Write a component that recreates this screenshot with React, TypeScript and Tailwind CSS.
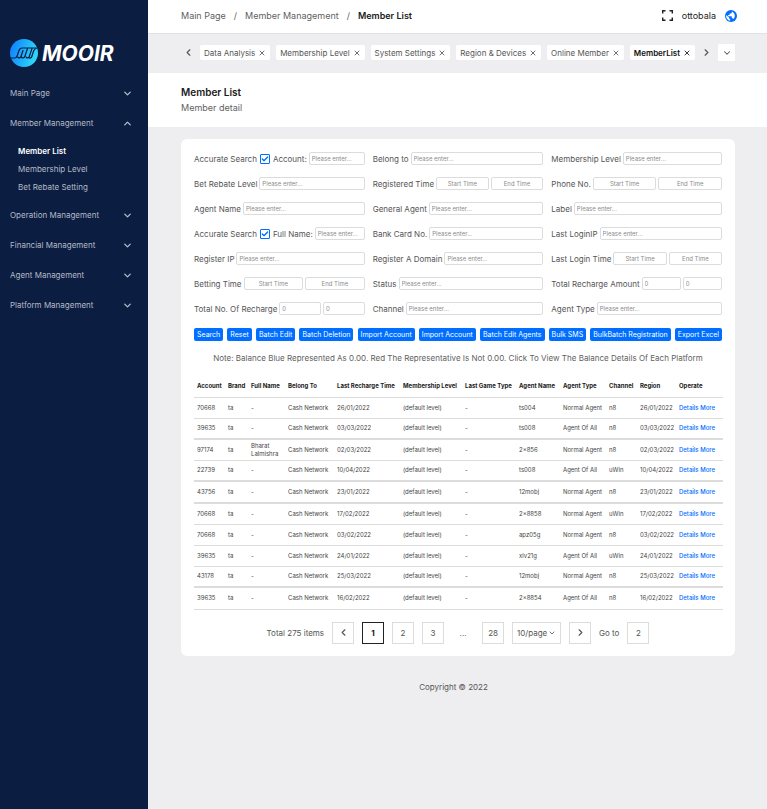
import { useState } from 'react';
import { Check, ChevronDown, ChevronLeft, ChevronRight, ChevronUp, X } from 'lucide-react';

const menu = [
  { label: 'Main Page' },
  { label: 'Member Management', children: ['Member List', 'Membership Level', 'Bet Rebate Setting'] },
  { label: 'Operation Management' },
  { label: 'Financial Management' },
  { label: 'Agent Management' },
  { label: 'Platform Management' },
];

const tabs = ['Data Analysis', 'Membership Level', 'System Settings', 'Region & Devices', 'Online Member', 'MemberList'];

type FieldType = 'text' | 'time' | 'range' | 'check';

interface FieldDef {
  label: string;
  type: FieldType;
  sub?: string;
}

// Row by row, three fields each
const fields: FieldDef[] = [
  { label: 'Accurate Search', type: 'check', sub: 'Account:' },
  { label: 'Belong to', type: 'text' },
  { label: 'Membership Level', type: 'text' },
  { label: 'Bet Rebate Level', type: 'text' },
  { label: 'Registered Time', type: 'time' },
  { label: 'Phone No.', type: 'time' },
  { label: 'Agent Name', type: 'text' },
  { label: 'General Agent', type: 'text' },
  { label: 'Label', type: 'text' },
  { label: 'Accurate Search', type: 'check', sub: 'Full Name:' },
  { label: 'Bank Card No.', type: 'text' },
  { label: 'Last LoginIP', type: 'text' },
  { label: 'Register IP', type: 'text' },
  { label: 'Register A Domain', type: 'text' },
  { label: 'Last Login Time', type: 'time' },
  { label: 'Betting Time', type: 'time' },
  { label: 'Status', type: 'text' },
  { label: 'Total Recharge Amount', type: 'range' },
  { label: 'Total No. Of Recharge', type: 'range' },
  { label: 'Channel', type: 'text' },
  { label: 'Agent Type', type: 'text' },
];

const actions = [
  'Search',
  'Reset',
  'Batch Edit',
  'Batch Deletion',
  'Import Account',
  'Import Account',
  'Batch Edit Agents',
  'Bulk SMS',
  'BulkBatch Registration',
  'Export Excel',
];

const columns = [
  { label: 'Account', width: 'w-[31px]' },
  { label: 'Brand', width: 'w-[23px]' },
  { label: 'Full Name', width: 'w-[37px]' },
  { label: 'Belong To', width: 'w-[49px]' },
  { label: 'Last Recharge Time', width: 'w-[66px]' },
  { label: 'Membership Level', width: 'w-[62px]' },
  { label: 'Last Game Type', width: 'w-[54px]' },
  { label: 'Agent Name', width: 'w-[44px]' },
  { label: 'Agent Type', width: 'w-[46px]' },
  { label: 'Channel', width: 'w-[31px]' },
  { label: 'Region', width: 'w-[39px]' },
  { label: 'Operate', width: 'w-[47px]' },
];

const members = [
  { account: '70668', name: '-', date: '26/01/2022', agent: 'ts004', type: 'Normal Agent', channel: 'n8' },
  { account: '39635', name: '-', date: '03/03/2022', agent: 'ts008', type: 'Agent Of All', channel: 'n8' },
  { account: '97174', name: 'Bharat Lalmishra', date: '02/03/2022', agent: '2×856', type: 'Normal Agent', channel: 'n8' },
  { account: '22739', name: '-', date: '10/04/2022', agent: 'ts008', type: 'Agent Of All', channel: 'uWin' },
  { account: '43756', name: '-', date: '23/01/2022', agent: '12mobj', type: 'Normal Agent', channel: 'n8' },
  { account: '70668', name: '-', date: '17/02/2022', agent: '2×8858', type: 'Normal Agent', channel: 'uWin' },
  { account: '70668', name: '-', date: '03/02/2022', agent: 'apz05g', type: 'Normal Agent', channel: 'n8' },
  { account: '39635', name: '-', date: '24/01/2022', agent: 'xlv21g', type: 'Agent Of All', channel: 'uWin' },
  { account: '43178', name: '-', date: '25/03/2022', agent: '12mobj', type: 'Normal Agent', channel: 'n8' },
  { account: '39635', name: '-', date: '16/02/2022', agent: '2×8854', type: 'Agent Of All', channel: 'n8' },
];

const inputClass =
  'h-[13px] min-w-0 flex-1 rounded-xs border border-[#dcdcdc] bg-white px-0.5 text-[6px] leading-none text-[#555] outline-none placeholder:text-[#8c8c8c] focus:border-[#006eff]';

function Logo() {
  return (
    <div className="flex h-[30px] items-center gap-1 px-2.5">
      <svg viewBox="0 0 28 28" className="size-7 shrink-0" aria-hidden="true">
        <defs>
          <linearGradient id="logo" x1="0" y1="0" x2="1" y2="0.3">
            <stop offset="0" stopColor="#0a7bff" />
            <stop offset="1" stopColor="#2fd5f8" />
          </linearGradient>
        </defs>
        <circle cx="14" cy="14" r="14" fill="url(#logo)" />
        <g fill="none" stroke="#0b1d41" strokeWidth="1.2" strokeLinecap="round" strokeLinejoin="round">
          <path d="M0 19h4.500c1.500 0 2.200-.8 2.700-2.300l1.700-5C9.500 9.800 10.400 9 12.200 9H28" />
          <path d="M13 11.500l-2 6c-.5 1.500-2.800 2-3.200.5" />
          <path d="M17.500 9.500l-2.700 8c-.5 1.500-3 2-3.300.3" />
          <path d="M22 9.500l-2.700 8c-.5 1.500-3 2-3.300.3" />
          <path d="M26 9.500c-1.500.3-1.900 1-2.400 2.500l-1.800 5.500c-.5 1.500-2 2-2.800 1.200" />
        </g>
      </svg>
      <span className="text-[21px] leading-none font-bold text-white italic">MOOIR</span>
    </div>
  );
}

function Sidebar() {
  return (
    <aside className="w-[148px] shrink-0 bg-[#0b1d41] pt-[38px] text-[8px] text-[#b4bac6]">
      <Logo />
      <nav className="mt-2.5">
        {menu.map(item => (
          <div key={item.label}>
            <button className="flex h-[30px] w-full items-center justify-between pr-[15px] pl-2.5">
              {item.label}
              {item.children ? (
                <ChevronUp className="size-[11px]" strokeWidth={3} />
              ) : (
                <ChevronDown className="size-[11px]" strokeWidth={3} />
              )}
            </button>
            {item.children && (
              <div className="flex flex-col py-1 pl-[18px]">
                {item.children.map((child, i) => (
                  <a key={child} href="#" className={`leading-[18px] ${i === 0 ? 'font-semibold text-white' : ''}`}>
                    {child}
                  </a>
                ))}
              </div>
            )}
          </div>
        ))}
      </nav>
    </aside>
  );
}

function Globe() {
  return (
    <svg viewBox="0 0 24 24" className="size-3" aria-hidden="true">
      <circle cx="12" cy="12" r="12" fill="#006eff" />
      <path
        fill="#fff"
        d="M2.500 10l6 5.500v1.200c0 1 .8 1.800 1.800 1.800V21.500C5.800 21 2.300 17.200 2.300 12.500zM13.500 3.200v1.600c0 1.200-.9 2.100-2.100 2.100H9.300v2.200c0 .6-.5 1-1 1H6.200v2.200h6.500c.6 0 1 .5 1 1V16.500h1.200c1 0 1.800.7 2.100 1.500 3.600-3.300 4.400-10.500-3.500-14.800z"
      />
    </svg>
  );
}

function TopBar() {
  return (
    <header className="flex h-[33px] items-center justify-between bg-white pr-[30px] pb-0.5 pl-[33px] text-[9px] text-[#5f5f5f]">
      <nav className="flex gap-2" aria-label="Breadcrumb">
        <a href="#">Main Page</a>
        <span>/</span>
        <a href="#">Member Management</a>
        <span>/</span>
        <span className="font-semibold text-[#1a1a1a]">Member List</span>
      </nav>
      <div className="flex items-center gap-[9px] text-[#222]">
        <button aria-label="Full screen">
          <svg viewBox="0 0 11 11" className="size-[11px]" fill="none" stroke="currentColor" strokeWidth="1.4">
            <path d="M.7 3.500V.7h2.800M7.500.7h2.800v2.800M10.300 7.500v2.800H7.500M3.500 10.300H.7V7.500" />
          </svg>
        </button>
        <span>ottobala</span>
        <button aria-label="Language">
          <Globe />
        </button>
      </div>
    </header>
  );
}

function TabBar() {
  return (
    <div className="flex h-10 items-center border-t border-[#e2e2e4] pr-8 pb-0.5 pl-[33px] text-[8px] text-[#555]">
      <button aria-label="Previous tabs" className="mr-1.5 ml-0.5">
        <ChevronLeft className="size-[11px]" strokeWidth={2.5} />
      </button>
      <div className="flex flex-1 justify-between">
        {tabs.map(tab => (
          <div
            key={tab}
            className={`flex h-[15px] items-center gap-[3px] rounded-xs bg-white px-1 whitespace-nowrap ${
              tab === 'MemberList' ? 'font-semibold text-[#111]' : ''
            }`}
          >
            {tab}
            <button aria-label={`Close ${tab}`}>
              <X className="size-2" strokeWidth={2.5} />
            </button>
          </div>
        ))}
      </div>
      <button aria-label="Next tabs" className="mx-1.5">
        <ChevronRight className="size-[11px]" strokeWidth={2.5} />
      </button>
      <button aria-label="All tabs" className="flex size-[17px] items-center justify-center bg-white">
        <ChevronDown className="size-2.5" strokeWidth={2.5} />
      </button>
    </div>
  );
}

function Field({ id, label, type, sub }: FieldDef & { id: string }) {
  const [checked, setChecked] = useState(true);

  return (
    <div className="flex h-[13px] items-center gap-0.5 whitespace-nowrap">
      <label htmlFor={type === 'check' ? `${id}-check` : id}>{label}</label>
      {type === 'check' && (
        <>
          <span className="mx-px grid size-[10px] place-items-center">
            <input
              id={`${id}-check`}
              type="checkbox"
              checked={checked}
              onChange={e => setChecked(e.target.checked)}
              className="col-start-1 row-start-1 size-[10px] appearance-none rounded-[1px] border border-[#006eff] bg-white"
            />
            {checked && (
              <Check className="pointer-events-none col-start-1 row-start-1 size-2 text-[#006eff]" strokeWidth={4} />
            )}
          </span>
          <label htmlFor={id}>{sub}</label>
        </>
      )}
      {(type === 'text' || type === 'check') && (
        <input id={id} type="text" placeholder="Please enter..." className={inputClass} />
      )}
      {type === 'time' && (
        <>
          <input id={id} type="text" placeholder="Start Time" className={`${inputClass} text-center`} />
          <input type="text" aria-label={`${label} end`} placeholder="End Time" className={`${inputClass} text-center`} />
        </>
      )}
      {type === 'range' && (
        <>
          <input id={id} type="text" placeholder="0" className={inputClass} />
          <input type="text" aria-label={`${label} max`} placeholder="0" className={inputClass} />
        </>
      )}
    </div>
  );
}

function MemberTable() {
  return (
    <table className="mt-3 w-full table-fixed border-collapse text-left text-[6px] leading-[8px] text-[#444]">
      <thead>
        <tr className="h-[21px] border-b border-[#dcdcdc] text-[#1a1a1a]">
          {columns.map(col => (
            <th key={col.label} className={`${col.width} pl-[3px] font-bold whitespace-nowrap`}>
              {col.label}
            </th>
          ))}
        </tr>
      </thead>
      <tbody>
        {members.map((m, i) => (
          <tr
            key={i}
            className="h-[21px] border-b border-[#dcdcdc] nth-2:border-b-2 nth-4:border-b-2 nth-5:border-b-2 nth-9:border-b-2 nth-[5n]:h-[22px] [&>td]:pl-[3px]"
          >
            <td>{m.account}</td>
            <td>ta</td>
            <td>{m.name}</td>
            <td className="whitespace-nowrap">Cash Network</td>
            <td>{m.date}</td>
            <td>(default level)</td>
            <td>-</td>
            <td>{m.agent}</td>
            <td className="whitespace-nowrap">{m.type}</td>
            <td>{m.channel}</td>
            <td>{m.date}</td>
            <td className="font-medium whitespace-nowrap text-[#006eff]">
              <a href="#">Details</a> <a href="#">More</a>
            </td>
          </tr>
        ))}
      </tbody>
    </table>
  );
}

function Pagination() {
  const box = 'flex size-[22px] items-center justify-center border';

  return (
    <div className="mt-3 flex items-center justify-center gap-2 text-[8px] text-[#555]">
      <span>Total 275 items</span>
      <button aria-label="Previous page" className={`${box} border-[#dcdcdc]`}>
        <ChevronLeft className="size-[11px]" strokeWidth={2.5} />
      </button>
      <button className={`${box} border-[#222] font-bold text-[#111]`}>1</button>
      <button className={`${box} border-[#dcdcdc]`}>2</button>
      <button className={`${box} border-[#dcdcdc]`}>3</button>
      <span className="w-[22px] text-center">...</span>
      <button className={`${box} border-[#dcdcdc]`}>28</button>
      <div className="grid h-[22px] w-[49px] items-center border border-[#dcdcdc]">
        <select aria-label="Page size" className="col-start-1 row-start-1 h-full appearance-none pl-1 outline-none">
          <option>10/page</option>
          <option>20/page</option>
        </select>
        <ChevronDown
          className="pointer-events-none col-start-1 row-start-1 mr-1 size-2 justify-self-end"
          strokeWidth={2.5}
        />
      </div>
      <button aria-label="Next page" className={`${box} border-[#dcdcdc]`}>
        <ChevronRight className="size-[11px]" strokeWidth={2.5} />
      </button>
      <label htmlFor="goto">Go to</label>
      <input
        id="goto"
        type="text"
        defaultValue="2"
        className="size-[22px] border border-[#dcdcdc] text-center outline-none"
      />
    </div>
  );
}

export default function App() {
  return (
    <div className="flex min-h-screen bg-[#eeeef0] font-[Inter,sans-serif] leading-[12px]">
      <Sidebar />
      <main className="min-w-0 flex-1">
        <TopBar />
        <TabBar />
        <section className="bg-white pt-3 pb-[11px] pl-[33px]">
          <h1 className="text-[10px] leading-[15px] font-semibold text-[#1a1a1a]">Member List</h1>
          <p className="text-[9px] leading-[16px] text-[#5f5f5f]">Member detail</p>
        </section>

        <section className="mt-3 mr-8 ml-[33px] rounded-md bg-white px-[13px] py-3">
          <form className="grid grid-cols-3 gap-x-2 gap-y-3 pt-px text-[8px] text-[#555]">
            {fields.map((field, i) => (
              <Field key={i} id={`field-${i}`} {...field} />
            ))}
          </form>
          <div className="mt-[13px] flex justify-between">
            {actions.map((action, i) => (
              <button
                key={i}
                className="h-[13px] rounded-xs bg-[#006eff] px-[3px] text-[7px] leading-none whitespace-nowrap text-white"
              >
                {action}
              </button>
            ))}
          </div>
          <p className="mt-[11px] text-center text-[8px] text-[#5f5f5f]">
            Note: Balance Blue Represented As 0.00. Red The Representative Is Not 0.00. Click To View The Balance
            Details Of Each Platform
          </p>
          <MemberTable />
          <Pagination />
        </section>

        <footer className="pt-[25px] pr-2 text-center text-[8px] text-[#555]">Copyright © 2022</footer>
      </main>
    </div>
  );
}
